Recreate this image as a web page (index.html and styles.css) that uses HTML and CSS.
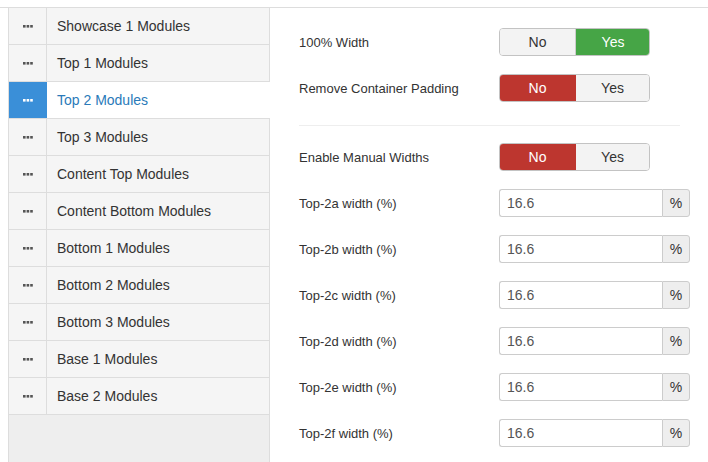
FILE: index.html
```html
<!DOCTYPE html>
<html>
<head>
<meta charset="utf-8">
<link rel="stylesheet" href="styles.css">
</head>
<body>
<div class="page">
  <div class="tabs">
    <ul class="nav">
      <li class="item"><span class="ic"><svg width="10" height="4" viewBox="0 0 10 4"><rect x="0" y="1" width="2.6" height="2.6"/><rect x="3.6" y="1" width="2.6" height="2.6"/><rect x="7.2" y="1" width="2.6" height="2.6"/></svg></span><span class="lbl">Showcase 1 Modules</span></li>
      <li class="item"><span class="ic"><svg width="10" height="4" viewBox="0 0 10 4"><rect x="0" y="1" width="2.6" height="2.6"/><rect x="3.6" y="1" width="2.6" height="2.6"/><rect x="7.2" y="1" width="2.6" height="2.6"/></svg></span><span class="lbl">Top 1 Modules</span></li>
      <li class="item active"><span class="ic"><svg width="10" height="4" viewBox="0 0 10 4"><rect x="0" y="1" width="2.6" height="2.6"/><rect x="3.6" y="1" width="2.6" height="2.6"/><rect x="7.2" y="1" width="2.6" height="2.6"/></svg></span><span class="lbl">Top 2 Modules</span></li>
      <li class="item"><span class="ic"><svg width="10" height="4" viewBox="0 0 10 4"><rect x="0" y="1" width="2.6" height="2.6"/><rect x="3.6" y="1" width="2.6" height="2.6"/><rect x="7.2" y="1" width="2.6" height="2.6"/></svg></span><span class="lbl">Top 3 Modules</span></li>
      <li class="item"><span class="ic"><svg width="10" height="4" viewBox="0 0 10 4"><rect x="0" y="1" width="2.6" height="2.6"/><rect x="3.6" y="1" width="2.6" height="2.6"/><rect x="7.2" y="1" width="2.6" height="2.6"/></svg></span><span class="lbl">Content Top Modules</span></li>
      <li class="item"><span class="ic"><svg width="10" height="4" viewBox="0 0 10 4"><rect x="0" y="1" width="2.6" height="2.6"/><rect x="3.6" y="1" width="2.6" height="2.6"/><rect x="7.2" y="1" width="2.6" height="2.6"/></svg></span><span class="lbl">Content Bottom Modules</span></li>
      <li class="item"><span class="ic"><svg width="10" height="4" viewBox="0 0 10 4"><rect x="0" y="1" width="2.6" height="2.6"/><rect x="3.6" y="1" width="2.6" height="2.6"/><rect x="7.2" y="1" width="2.6" height="2.6"/></svg></span><span class="lbl">Bottom 1 Modules</span></li>
      <li class="item"><span class="ic"><svg width="10" height="4" viewBox="0 0 10 4"><rect x="0" y="1" width="2.6" height="2.6"/><rect x="3.6" y="1" width="2.6" height="2.6"/><rect x="7.2" y="1" width="2.6" height="2.6"/></svg></span><span class="lbl">Bottom 2 Modules</span></li>
      <li class="item"><span class="ic"><svg width="10" height="4" viewBox="0 0 10 4"><rect x="0" y="1" width="2.6" height="2.6"/><rect x="3.6" y="1" width="2.6" height="2.6"/><rect x="7.2" y="1" width="2.6" height="2.6"/></svg></span><span class="lbl">Bottom 3 Modules</span></li>
      <li class="item"><span class="ic"><svg width="10" height="4" viewBox="0 0 10 4"><rect x="0" y="1" width="2.6" height="2.6"/><rect x="3.6" y="1" width="2.6" height="2.6"/><rect x="7.2" y="1" width="2.6" height="2.6"/></svg></span><span class="lbl">Base 1 Modules</span></li>
      <li class="item"><span class="ic"><svg width="10" height="4" viewBox="0 0 10 4"><rect x="0" y="1" width="2.6" height="2.6"/><rect x="3.6" y="1" width="2.6" height="2.6"/><rect x="7.2" y="1" width="2.6" height="2.6"/></svg></span><span class="lbl">Base 2 Modules</span></li>
    </ul>
    <div class="content">
      <div class="row">
        <label class="label">100% Width</label>
        <div class="toggle"><span class="opt">No</span><span class="opt on-yes">Yes</span></div>
      </div>
      <div class="row">
        <label class="label">Remove Container Padding</label>
        <div class="toggle"><span class="opt on-no">No</span><span class="opt">Yes</span></div>
      </div>
      <hr class="sep">
      <div class="row">
        <label class="label">Enable Manual Widths</label>
        <div class="toggle"><span class="opt on-no">No</span><span class="opt">Yes</span></div>
      </div>
      <div class="row r-in">
        <label class="label">Top-2a width (%)</label>
        <div class="group"><span class="field">16.6</span><span class="addon">%</span></div>
      </div>
      <div class="row">
        <label class="label">Top-2b width (%)</label>
        <div class="group"><span class="field">16.6</span><span class="addon">%</span></div>
      </div>
      <div class="row">
        <label class="label">Top-2c width (%)</label>
        <div class="group"><span class="field">16.6</span><span class="addon">%</span></div>
      </div>
      <div class="row">
        <label class="label">Top-2d width (%)</label>
        <div class="group"><span class="field">16.6</span><span class="addon">%</span></div>
      </div>
      <div class="row">
        <label class="label">Top-2e width (%)</label>
        <div class="group"><span class="field">16.6</span><span class="addon">%</span></div>
      </div>
      <div class="row">
        <label class="label">Top-2f width (%)</label>
        <div class="group"><span class="field">16.6</span><span class="addon">%</span></div>
      </div>
    </div>
  </div>
</div>
</body>
</html>
```
FILE: styles.css
```css
html, body {
  margin: 0;
  padding: 0;
  background: #fff;
  font-family: "Liberation Sans", Arial, sans-serif;
  color: #333;
}
.page {
  padding-top: 7px;
  height: 455px;
  overflow: hidden;
}
.tabs {
  display: flex;
  border-top: 1px solid #ddd;
  height: 455px;
}
.nav {
  list-style: none;
  margin: 0 0 0 8px;
  padding: 0;
  width: 260px;
  flex: none;
  background: #eee;
  border-left: 1px solid #ddd;
  border-right: 1px solid #ddd;
}
.item {
  display: flex;
  height: 36px;
  border-bottom: 1px solid #ddd;
  background: #f5f5f5;
  font-size: 14px;
}
.ic {
  width: 37px;
  flex: none;
  display: flex;
  align-items: center;
  justify-content: center;
  border-right: 1px solid #ddd;
  fill: #555;
}
.lbl {
  display: flex;
  align-items: center;
  padding-left: 10px;
  color: #333;
}
.item.active {
  background: #fff;
  margin-right: -1px;
}
.item.active .ic {
  background: #3a8fd8;
  border-right-color: #3a8fd8;
  fill: #fff;
}
.item.active .lbl {
  color: #2a7ab9;
}
.content {
  flex: 1;
  padding: 20px 0 0 29px;
  font-size: 13px;
}
.row {
  display: flex;
  align-items: center;
  height: 28px;
  margin-bottom: 18px;
}
.r-in {
  margin-top: 1px;
}
.label {
  width: 200px;
  flex: none;
}
.toggle {
  display: flex;
  width: 151px;
  height: 28px;
  box-sizing: border-box;
  border: 1px solid #c3c3c3;
  border-radius: 4px;
  overflow: hidden;
  font-size: 14px;
}
.opt {
  flex: 1;
  display: flex;
  align-items: center;
  justify-content: center;
  background: #f3f3f3;
  color: #333;
}
.opt:first-child {
  flex: 0 0 75px;
  border-right: 1px solid #ccc;
}
.opt.on-yes {
  background: #46a546;
  color: #fff;
  margin: -1px -1px -1px 0;
}
.opt.on-no {
  background: #bd362f;
  color: #fff;
  margin: -1px 0 -1px -1px;
  border-right: 0;
  flex-basis: 77px;
}
.sep {
  border: 0;
  border-top: 1px solid #eee;
  margin: 23px 28px 17px 0;
  height: 0;
}
.group {
  display: flex;
  height: 28px;
  font-size: 14px;
}
.field {
  width: 163px;
  box-sizing: border-box;
  border: 1px solid #ccc;
  border-right: 0;
  border-radius: 3px 0 0 3px;
  display: flex;
  align-items: center;
  padding-left: 7px;
  color: #555;
  background: #fff;
}
.addon {
  width: 28px;
  box-sizing: border-box;
  border: 1px solid #ccc;
  border-radius: 0 3px 3px 0;
  background: #eee;
  display: flex;
  align-items: center;
  justify-content: center;
  color: #333;
}
```
